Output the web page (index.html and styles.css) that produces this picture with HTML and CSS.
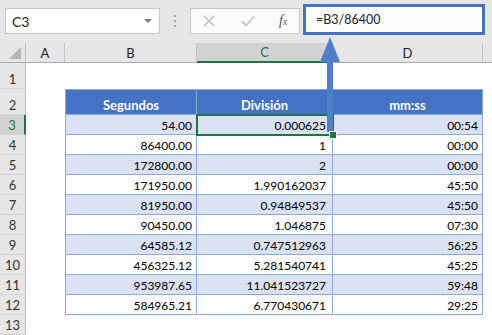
FILE: index.html
```html
<!DOCTYPE html>
<html lang="es">
<head>
    <meta charset="UTF-8">
    <title>Segundos a mm:ss</title>
    <link rel="stylesheet" href="styles.css">
</head>
<body>
    <div class="app">
        <div class="formula-bar">
            <div class="name-box"><span>C3</span><span class="caret"></span></div>
            <div class="grip"><i></i><i></i><i></i></div>
            <div class="fx-buttons">
                <svg class="icon" width="12" height="12" viewBox="0 0 12 12"><path d="M1 1 L11 11 M11 1 L1 11" stroke="#bdbdbd" stroke-width="1.6" fill="none"/></svg>
                <svg class="icon" width="14" height="12" viewBox="0 0 14 12"><path d="M1 6.5 L5 10.5 L13 1.5" stroke="#c4c4c4" stroke-width="1.8" fill="none"/></svg>
                <span class="fx">f<span>x</span></span>
            </div>
            <div class="formula-input">=B3/86400</div>
        </div>

        <div class="sheet">
            <div class="row heads">
                <div class="corner"><span></span></div>
                <div class="col-head">A</div>
                <div class="col-head">B</div>
                <div class="col-head active">C</div>
                <div class="col-head">D</div>
                <div class="col-head last"></div>
            </div>
            <div class="row tall"><div class="row-head">1</div></div>
            <div class="row tall">
                <div class="row-head">2</div><div></div>
                <div class="t th first">Segundos</div>
                <div class="t th">División</div>
                <div class="t th">mm:ss</div>
            </div>
            <div class="row band">
                <div class="row-head active">3</div><div></div>
                <div class="t first">54.00</div>
                <div class="t c selected">0.000625</div>
                <div class="t">00:54</div>
            </div>
            <div class="row">
                <div class="row-head">4</div><div></div>
                <div class="t first">86400.00</div>
                <div class="t c">1</div>
                <div class="t">00:00</div>
            </div>
            <div class="row band">
                <div class="row-head">5</div><div></div>
                <div class="t first">172800.00</div>
                <div class="t c">2</div>
                <div class="t">00:00</div>
            </div>
            <div class="row">
                <div class="row-head">6</div><div></div>
                <div class="t first">171950.00</div>
                <div class="t c">1.990162037</div>
                <div class="t">45:50</div>
            </div>
            <div class="row band">
                <div class="row-head">7</div><div></div>
                <div class="t first">81950.00</div>
                <div class="t c">0.94849537</div>
                <div class="t">45:50</div>
            </div>
            <div class="row">
                <div class="row-head">8</div><div></div>
                <div class="t first">90450.00</div>
                <div class="t c">1.046875</div>
                <div class="t">07:30</div>
            </div>
            <div class="row band">
                <div class="row-head">9</div><div></div>
                <div class="t first">64585.12</div>
                <div class="t c">0.747512963</div>
                <div class="t">56:25</div>
            </div>
            <div class="row">
                <div class="row-head">10</div><div></div>
                <div class="t first">456325.12</div>
                <div class="t c">5.281540741</div>
                <div class="t">45:25</div>
            </div>
            <div class="row band">
                <div class="row-head">11</div><div></div>
                <div class="t first">953987.65</div>
                <div class="t c">11.041523727</div>
                <div class="t">59:48</div>
            </div>
            <div class="row">
                <div class="row-head">12</div><div></div>
                <div class="t first">584965.21</div>
                <div class="t c">6.770430671</div>
                <div class="t">29:25</div>
            </div>
            <div class="row"><div class="row-head">13</div></div>
        </div>

        <!-- flecha que señala la fórmula de la celda activa -->
        <svg class="arrow" width="22" height="100" viewBox="0 0 22 100">
            <rect x="8" y="25" width="6" height="72" fill="#4f7fcb"/>
            <polygon points="11,2 1,27 21,27" fill="#4f7fcb"/>
        </svg>
    </div>
</body>
</html>
```

FILE: styles.css
```css
body {
    margin: 0;
    font-family: Lato, "Liberation Sans", sans-serif;
    color: #000;
    background: #fff;
}
.app {
    position: relative;
    width: 492px;
    height: 335px;
    overflow: hidden;
}
.formula-bar {
    display: flex;
    align-items: flex-start;
    height: 43px;
    background: #e6e6e6;
}
.name-box {
    display: flex;
    align-items: center;
    justify-content: space-between;
    box-sizing: border-box;
    width: 155px;
    height: 26px;
    margin: 8px 0 0 5px;
    padding: 0 7px 0 6px;
    background: #fff;
    border: 1px solid #c6c6c6;
    font-size: 14px;
    color: #222;
}
.caret {
    width: 0;
    height: 0;
    border-left: 4px solid transparent;
    border-right: 4px solid transparent;
    border-top: 4px solid #7a7a7a;
}
.grip {
    display: flex;
    flex-direction: column;
    gap: 3px;
    margin: 15px 0 0 14px;
}
.grip i {
    width: 2px;
    height: 2px;
    background: #a6a6a6;
}
.fx-buttons {
    display: flex;
    align-items: center;
    box-sizing: border-box;
    width: 110px;
    height: 26px;
    margin: 8px 0 0 14px;
    padding-left: 12px;
    background: #fcfcfc;
    border: 1px solid #c6c6c6;
}
.icon {
    display: block;
}
.icon + .icon {
    margin-left: 26px;
}
.fx {
    margin-left: 24px;
    font-family: "Liberation Serif", serif;
    font-style: italic;
    font-size: 14px;
    color: #555;
}
.fx span {
    font-size: 10px;
}
.formula-input {
    box-sizing: border-box;
    width: 182px;
    height: 31px;
    margin: 4px 0 0 3px;
    padding: 5px 0 0 10px;
    background: #fdfdfd;
    border: 3px solid #4472c4;
    font-size: 12.5px;
    color: #222;
}
.sheet {
    background: #fff;
}
.row {
    display: grid;
    grid-template-columns: 26px 39px 132px 136px 150px 1fr;
    height: 20px;
}
.row.tall {
    height: 26px;
}
.heads {
    background: #e6e6e6;
}
.corner {
    box-sizing: border-box;
    position: relative;
    border-right: 1px solid #bdbdbd;
    border-bottom: 1px solid #ababab;
}
.corner span {
    position: absolute;
    right: 4px;
    bottom: 3px;
    width: 0;
    height: 0;
    border-left: 12px solid transparent;
    border-bottom: 12px solid #b4b4b4;
}
.col-head {
    box-sizing: border-box;
    display: flex;
    align-items: center;
    justify-content: center;
    border-right: 1px solid #c0c0c0;
    border-bottom: 1px solid #ababab;
    font-size: 13px;
    color: #222;
}
.col-head.last {
    border-right: none;
}
.col-head.active {
    background: #d2d2d2;
    color: #217346;
    border-bottom: 2px solid #217346;
}
.row-head {
    box-sizing: border-box;
    display: flex;
    align-items: flex-end;
    justify-content: center;
    padding-bottom: 1px;
    background: #e6e6e6;
    border-right: 1px solid #bdbdbd;
    border-bottom: 1px solid #d4d4d4;
    font-size: 13px;
    color: #333;
}
.row-head.active {
    background: #d2d2d2;
    color: #217346;
    border-right: 2px solid #217346;
}
.t {
    box-sizing: border-box;
    display: flex;
    align-items: flex-end;
    justify-content: flex-end;
    padding: 0 4px 1px 0;
    border-right: 1px solid #8ea9db;
    border-bottom: 1px solid #8ea9db;
    font-size: 12px;
    line-height: 14px;
    white-space: nowrap;
}
.t.first {
    border-left: 1px solid #8ea9db;
}
.t.c {
    padding-right: 6px;
}
.t.th {
    justify-content: center;
    padding: 0 0 2px 0;
    background: #4472c4;
    border-top: 1px solid #8ea9db;
    color: #fff;
    font-weight: bold;
    font-size: 13px;
}
.band .t {
    background: #d9e1f2;
}
.selected {
    position: relative;
}
.selected::after {
    content: "";
    position: absolute;
    left: -1px;
    top: -1px;
    right: -2px;
    bottom: -2px;
    border: 2px solid #217346;
}
.selected::before {
    content: "";
    position: absolute;
    right: -5px;
    bottom: -5px;
    width: 6px;
    height: 6px;
    background: #217346;
    border: 1px solid #fff;
    z-index: 1;
}
.arrow {
    position: absolute;
    left: 319px;
    top: 35px;
}
```
